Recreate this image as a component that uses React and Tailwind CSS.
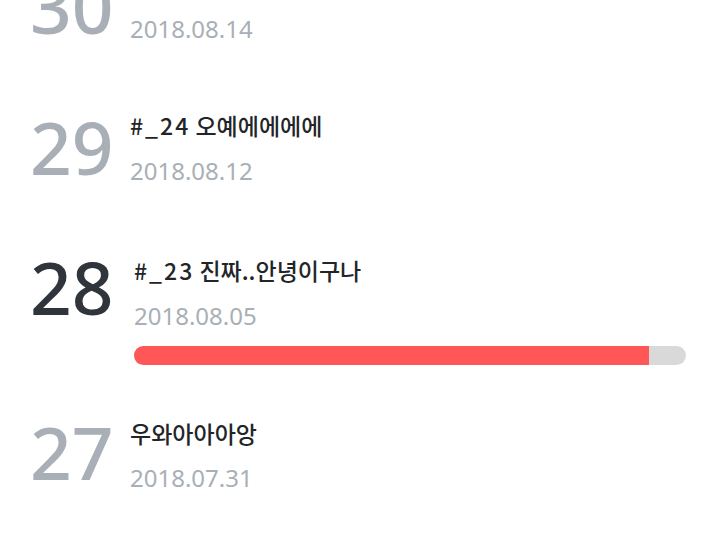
import React from "react";

const rows = [
  { n: "30", title: "", date: "2018.08.14", h: "h-[141px]", numMt: "mt-[10px]", titleMt: "mt-[13px]", dateMt: "mt-[19px]" },
  { n: "29", title: "#_24 오예에에에에", date: "2018.08.12", h: "h-[140px]", numMt: "mt-[10px]", titleMt: "mt-[12px]", dateMt: "mt-[21px]" },
  { n: "28", title: "#_23 진짜..안녕이구나", date: "2018.08.05", h: "h-[165px]", numMt: "mt-[10px]", titleMt: "mt-[17px]", dateMt: "mt-[21px]", active: true },
  { n: "27", title: "우와아아아앙", date: "2018.07.31", h: "h-[140px]", numMt: "mt-[10px]", titleMt: "mt-[15px]", dateMt: "mt-[20px]" },
];

function Title({ text }) {
  const m = text.match(/^(#_\d+)(.*)$/);
  if (!m) return <>{text}</>;
  return (
    <>
      <span className="tracking-[2px]">{m[1]}</span>
      {m[2]}
    </>
  );
}

function Row({ r }) {
  return (
    <div className={`flex ${r.h}`}>
      <div
        className={`${r.numMt} w-[100px] shrink-0 text-[73px] leading-none font-medium ${r.active ? "text-[#30353b]" : "text-[#a9afb6]"}`}
        style={{ fontFamily: '"Noto Sans", sans-serif' }}
      >
        {r.n}
      </div>
      <div className={`flex flex-col ${r.active ? "pl-[4px]" : ""} flex-1 pr-[33px]`}>
        <div
          className={`${r.titleMt} h-[26px] text-[23px] leading-[26px] font-medium text-[#222528] whitespace-nowrap`}
          style={{ fontFamily: '"Noto Sans CJK KR", "Noto Sans", sans-serif' }}
        >
          <Title text={r.title} />
        </div>
        <div
          className={`${r.dateMt} text-[24px] leading-none text-[#a9afb6]`}
          style={{ fontFamily: '"Noto Sans", sans-serif' }}
        >
          {r.date}
        </div>
        {r.active && (
          <div className="mt-[18px] h-[19px] w-[552px] rounded-full bg-[#d9d9d9] overflow-hidden">
            <div className="h-full bg-[#ff5757]" style={{ width: "93.3%" }} />
          </div>
        )}
      </div>
    </div>
  );
}

export default function App() {
  return (
    <div className="w-[720px] h-[540px] overflow-hidden bg-white">
      <div className="mt-[-41px] pl-[30px]">
        {rows.map((r) => (
          <Row key={r.n} r={r} />
        ))}
      </div>
    </div>
  );
}
